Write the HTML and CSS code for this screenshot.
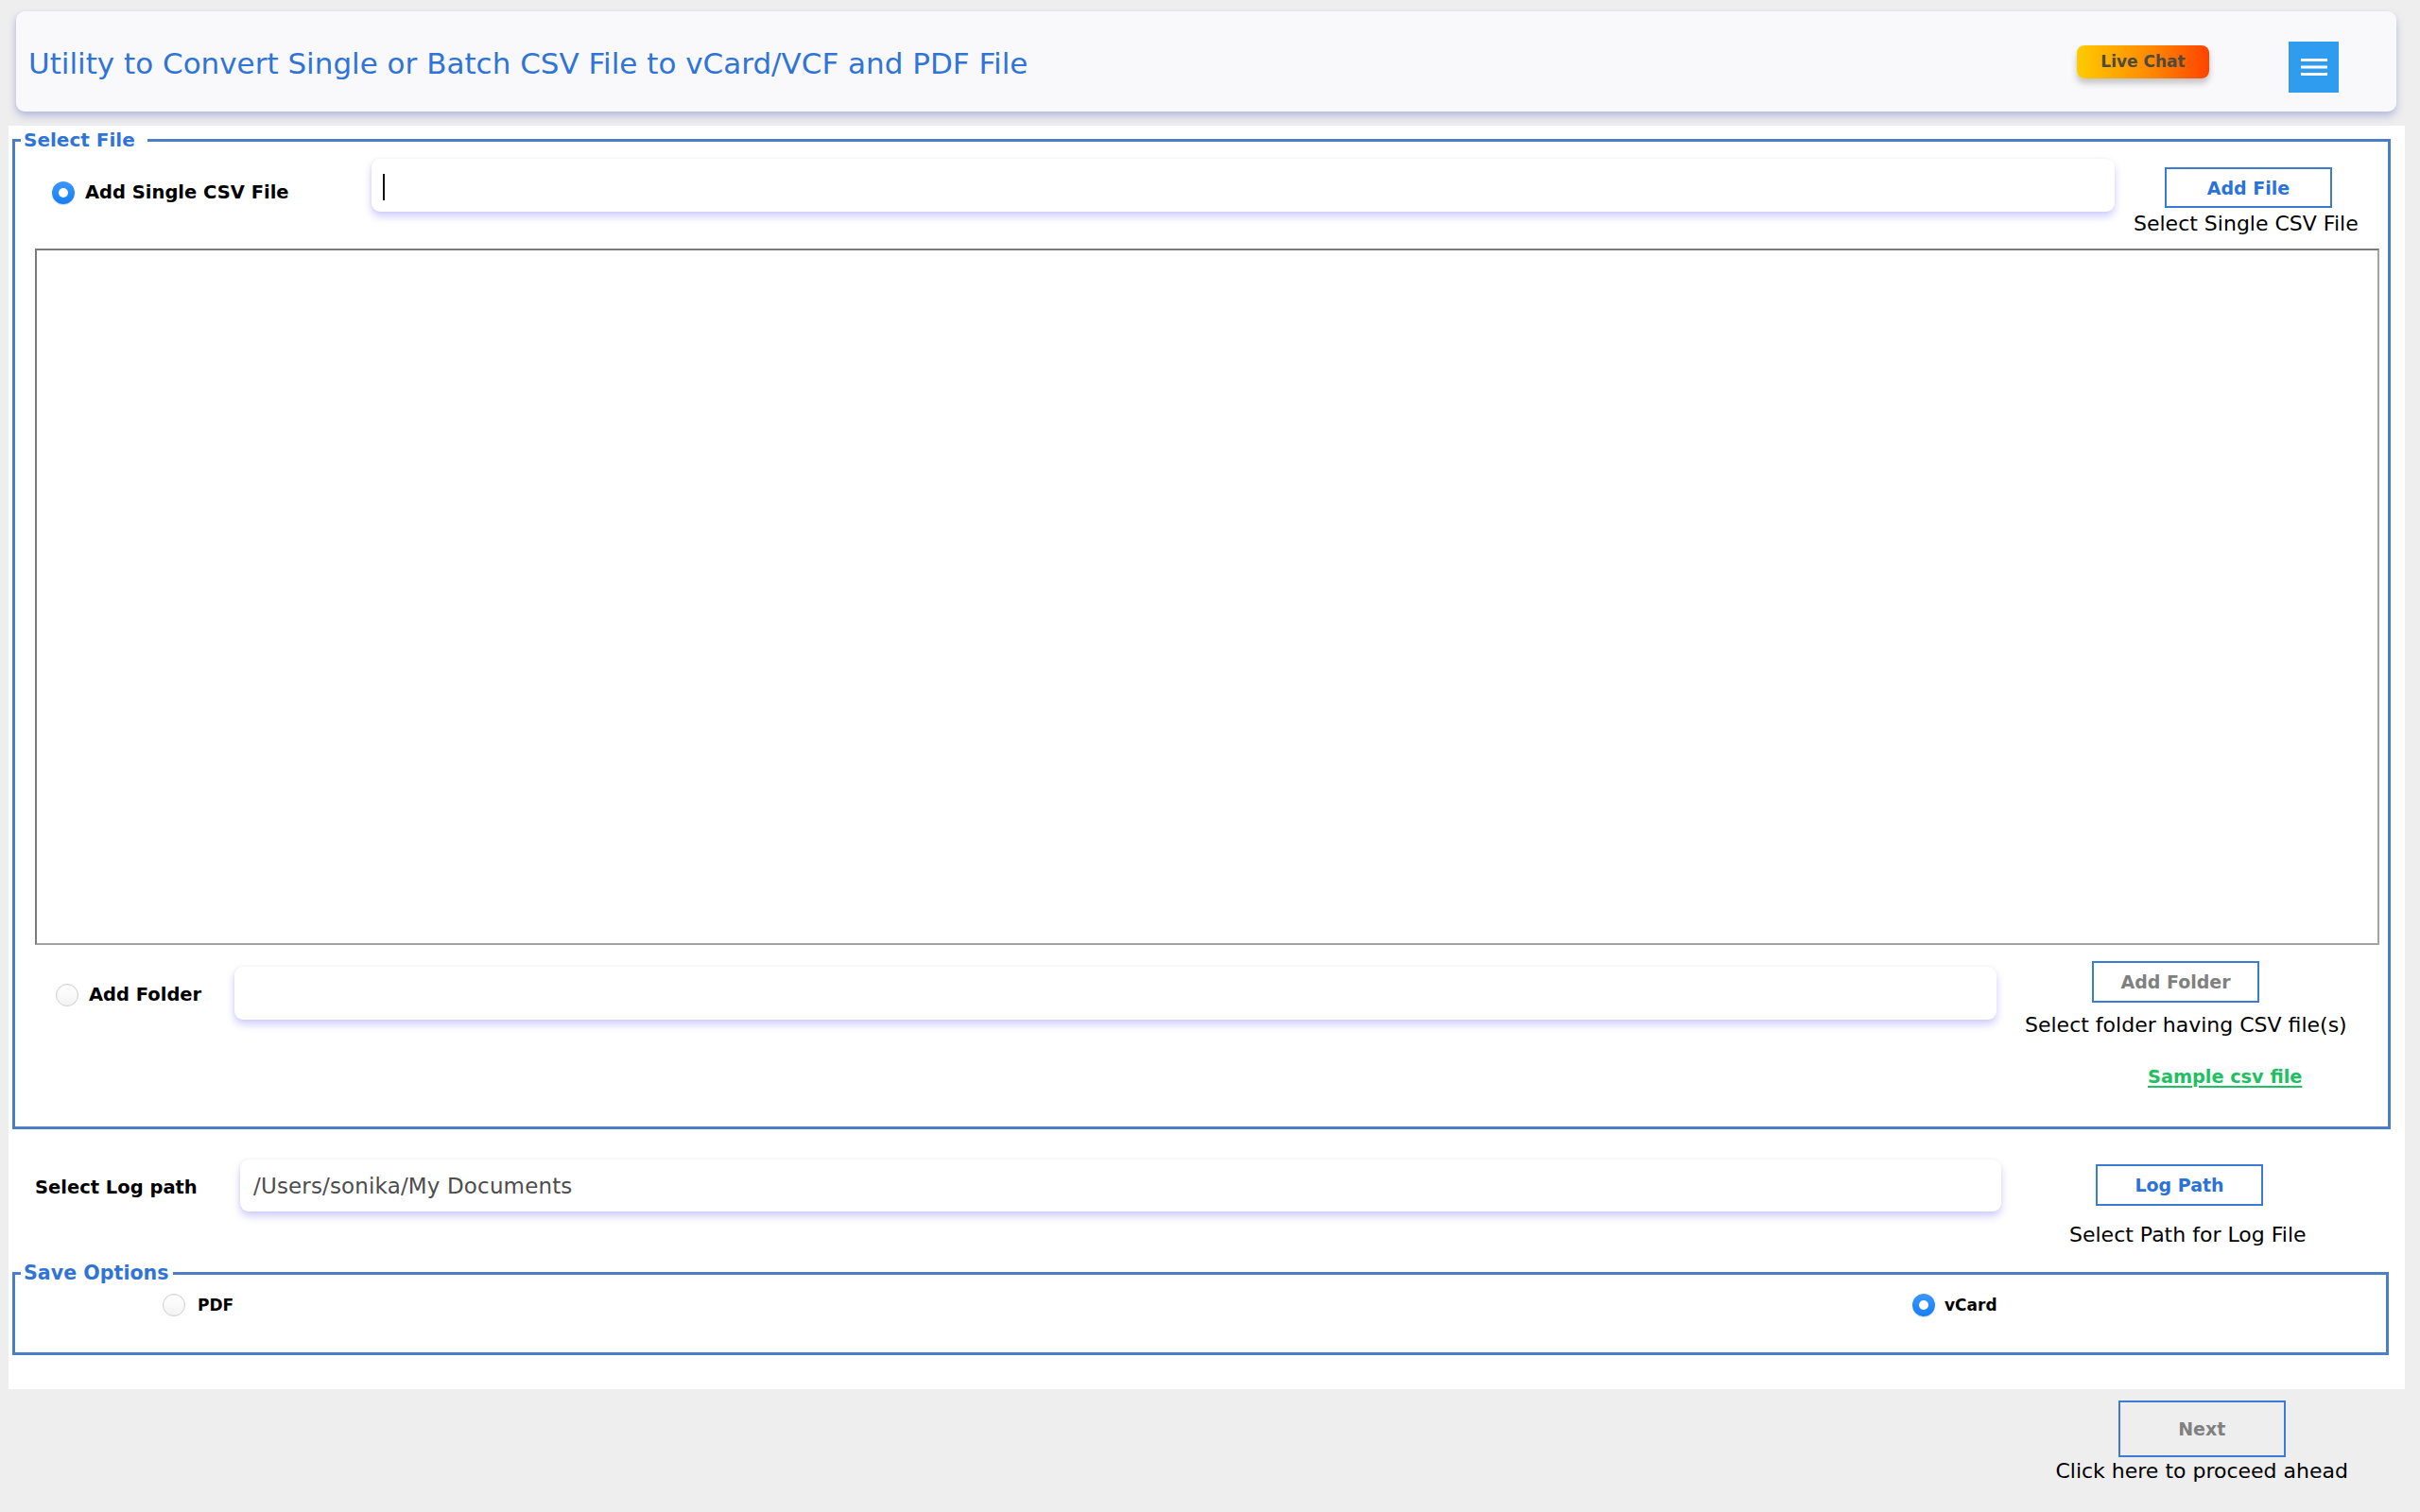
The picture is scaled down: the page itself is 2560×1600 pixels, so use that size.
FILE: index.html
```html
<!DOCTYPE html>
<html lang="en">
<head>
<meta charset="utf-8">
<title>CSV to vCard Converter</title>
<link rel="stylesheet" href="styles.css">
</head>
<body>
<header class="topbar">
  <h1 class="app-title">Utility to Convert Single or Batch CSV File to vCard/VCF and PDF File</h1>
  <button class="live-chat">Live Chat</button>
  <button class="menu-btn" aria-label="Menu">
    <svg width="28" height="20" viewBox="0 0 28 20"><rect x="0" y="1" width="28" height="3" fill="#fff"/><rect x="0" y="8.5" width="28" height="3" fill="#fff"/><rect x="0" y="16" width="28" height="3" fill="#fff"/></svg>
  </button>
</header>

<main class="panel">
  <fieldset class="group group-file">
    <legend class="group-title title-file">Select File</legend>

    <div class="row row-single">
      <label class="choice choice-single"><span class="radio radio-on"></span><span class="choice-text">Add Single CSV File</span></label>
      <div class="field field-single"><span class="caret"></span></div>
      <div class="side side-single">
        <button class="btn btn-blue btn-addfile">Add File</button>
        <span class="hint hint-single">Select Single CSV File</span>
      </div>
    </div>

    <div class="file-list"></div>

    <div class="row row-folder">
      <label class="choice choice-folder"><span class="radio"></span><span class="choice-text">Add Folder</span></label>
      <div class="field field-folder"></div>
      <div class="side side-folder">
        <button class="btn btn-gray btn-addfolder">Add Folder</button>
        <span class="hint hint-folder">Select folder having CSV file(s)</span>
        <a class="sample-link" href="#">Sample csv file</a>
      </div>
    </div>
  </fieldset>

  <div class="row row-log">
    <div class="choice choice-log"><span class="choice-text">Select Log path</span></div>
    <div class="field field-log"><span class="field-value">/Users/sonika/My Documents</span></div>
    <div class="side side-log">
      <button class="btn btn-blue btn-logpath">Log Path</button>
      <span class="hint hint-log">Select Path for Log File</span>
    </div>
  </div>

  <fieldset class="group group-save">
    <legend class="group-title title-save">Save Options</legend>
    <div class="save-row">
      <label class="opt opt-pdf"><span class="radio"></span><span class="opt-text">PDF</span></label>
      <label class="opt opt-vcard"><span class="radio radio-on"></span><span class="opt-text">vCard</span></label>
    </div>
  </fieldset>
</main>

<footer class="footer">
  <div class="next-wrap">
    <button class="btn btn-gray btn-next">Next</button>
    <span class="hint">Click here to proceed ahead</span>
  </div>
</footer>
</body>
</html>
```

FILE: styles.css
```css
* { box-sizing: border-box; }

html, body {
  margin: 0;
  padding: 0;
  background: #eeeeee;
  font-family: "DejaVu Sans", "Liberation Sans", sans-serif;
  color: #000;
}

body {
  width: 2560px;
  height: 1600px;
  overflow: hidden;
}

/* ---------- header ---------- */
.topbar {
  margin: 12px 25px 0 17px;
  height: 106px;
  background: #f9f9fb;
  border-radius: 9px;
  box-shadow: 0 5px 9px rgba(120, 130, 205, 0.45), -2px 1px 4px rgba(0, 0, 0, 0.04);
  display: flex;
  align-items: center;
  padding: 0 61px 0 13px;
  position: relative;
  z-index: 2;
}

.app-title {
  flex: 1;
  margin: 0;
  padding-top: 3px;
  font-size: 31px;
  font-weight: normal;
  color: #2f74d6;
  line-height: 40px;
  white-space: nowrap;
}

.live-chat {
  width: 140px;
  height: 35px;
  margin-right: 84px;
  border: none;
  border-radius: 8px;
  background: linear-gradient(90deg, #ffcb00 0%, #ff8a00 55%, #ff4300 100%);
  box-shadow: 0 5px 7px rgba(0, 0, 0, 0.22);
  font-family: "DejaVu Sans", sans-serif;
  font-weight: bold;
  font-size: 17px;
  color: #4d4a3e;
  padding: 0;
}

.menu-btn {
  width: 53px;
  height: 54px;
  margin-top: 12px;
  border: none;
  padding: 0;
  background: #2f9cf0;
  display: flex;
  align-items: center;
  justify-content: center;
}

/* ---------- main panel ---------- */
.panel {
  margin: 15px 16px 0 9px;
  height: 1337px;
  background: #ffffff;
  padding: 3px 0 0 0;
  position: relative;
  z-index: 1;
}

.group {
  margin: 0;
  border: 3px solid #4a7ec6;
  padding: 0;
  min-width: 0;
}

.group-file { margin: 0 15px 0 4px; padding-bottom: 40px; }
.group-save { margin: 15px 17px 0 4px; padding-bottom: 38px; }

.group-title {
  margin-left: 6px;
  padding: 0 13px 0 3px;
  font-weight: bold;
  font-size: 20px;
  line-height: 24px;
  color: #2f74d6;
}
.title-save { padding-right: 4px; font-size: 20.6px; }

.row {
  display: grid;
  align-items: start;
}

.row-single { grid-template-columns: 377px 1844px 1fr; margin-top: 8px; }
.row-folder { grid-template-columns: 232px 1864px 1fr; margin-top: 17px; }
.row-log    { grid-template-columns: 245px 1863px 1fr; margin-top: 32px; }

.choice {
  display: flex;
  align-items: center;
  height: 56px;
}
.choice-single { padding: 16px 0 0 39px; }
.choice-folder { padding: 4px 0 0 43px; margin-top: 6px; }
.choice-log    { padding: 4px 0 0 28px; height: 55px; }

.choice-text {
  font-weight: bold;
  font-size: 19.5px;
  line-height: 24px;
  white-space: nowrap;
}
.choice-single .choice-text,
.choice-folder .choice-text { margin-left: 11px; }

.radio {
  flex: none;
  width: 24px;
  height: 24px;
  border-radius: 50%;
  background: linear-gradient(#ffffff, #f3f3f3);
  border: 1px solid #cfcfcf;
  box-shadow: inset 0 1px 1px rgba(0, 0, 0, 0.05);
  display: inline-block;
  position: relative;
}
.radio-on {
  border: none;
  background: linear-gradient(#3c97ff, #167ef3);
  box-shadow: 0 1px 1px rgba(0, 60, 160, 0.2);
}
.radio-on::after {
  content: "";
  position: absolute;
  left: 7px;
  top: 7px;
  width: 10px;
  height: 10px;
  border-radius: 50%;
  background: #fff;
}

.field {
  height: 56px;
  background: #ffffff;
  border-radius: 9px;
  box-shadow: 0 5px 8px rgba(108, 96, 245, 0.32), -1px 0 3px rgba(0, 0, 0, 0.05);
  display: flex;
  align-items: center;
}
.field-folder { margin-top: 6px; }
.field-log { height: 55px; }

.caret {
  display: block;
  width: 2px;
  height: 28px;
  background: #111;
  margin: 3px 0 0 12px;
}

.field-value {
  margin-left: 14px;
  font-size: 23px;
  letter-spacing: 0.15px;
  color: #4d4d4d;
  white-space: nowrap;
}

.side {
  display: flex;
  flex-direction: column;
  align-items: flex-start;
}
.side-single { padding-top: 9px; }

.btn {
  width: 177px;
  height: 44px;
  background: #ffffff;
  border: 2px solid #3b7bd4;
  border-radius: 0;
  padding: 0;
  font-family: "DejaVu Sans", sans-serif;
  font-weight: bold;
  font-size: 19px;
}
.btn-blue { color: #2b72d9; }
.btn-gray { color: #808080; }

.btn-addfile { height: 43px; margin-left: 53px; }
.btn-addfolder { margin-left: 101px; }
.btn-logpath { margin-left: 100px; margin-top: 5px; }

.hint {
  font-size: 22px;
  line-height: 26px;
  white-space: nowrap;
  color: #000;
}
.hint-single { margin: 4px 0 0 20px; }
.hint-folder { margin: 11px 0 0 30px; }
.hint-log    { margin: 18px 0 0 72px; }

.sample-link {
  margin: 30px 0 0 160px;
  font-weight: bold;
  font-size: 19.3px;
  line-height: 24px;
  color: #1fc062;
  text-decoration: underline;
  text-decoration-thickness: 2px;
  text-underline-offset: 3px;
}

.file-list {
  margin: 13px 9px 0 21px;
  height: 737px;
  border-style: solid;
  border-width: 2px;
  border-color: #7b7b7b #a3a3a3 #a3a3a3 #7b7b7b;
  background: #fff;
}

/* ---------- save options ---------- */
.save-row {
  display: grid;
  grid-template-columns: 2007px 1fr;
  margin-top: 10px;
  height: 24px;
}

.opt {
  display: flex;
  align-items: center;
  height: 24px;
}
.opt-pdf { padding-left: 156px; }
.opt-text {
  font-weight: bold;
  font-size: 17px;
  line-height: 24px;
}
.opt-pdf .opt-text { margin-left: 13px; }
.opt-vcard .opt-text { margin-left: 10px; }

/* ---------- footer ---------- */
.footer {
  display: flex;
  justify-content: flex-end;
  padding-right: 76px;
  margin-top: 12px;
}

.next-wrap {
  display: flex;
  flex-direction: column;
  align-items: center;
}

.btn-next {
  height: 60px;
  background: transparent;
}
.next-wrap .hint { margin-top: 2px; }
```
